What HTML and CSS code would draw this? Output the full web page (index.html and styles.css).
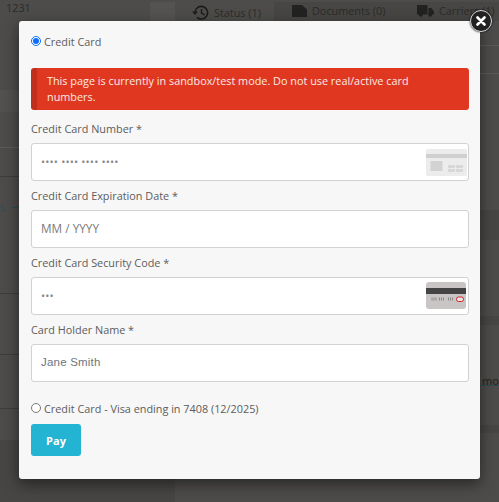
FILE: index.html

```html
<!DOCTYPE html>
<html lang="en">
<head>
  <meta charset="UTF-8">
  <title>Payment</title>
  <link rel="stylesheet" href="styles.css">
</head>
<body>

  <div class="backdrop">
    <div class="bg-shade bg-tab-a"></div>
    <div class="bg-shade bg-tab-b"></div>
    <div class="bg-shade bg-left-col"></div>
    <div class="bg-shade bg-left-band"></div>
    <div class="bg-shade bg-right-a"></div>
    <div class="bg-shade bg-right-b"></div>
    <div class="bg-shade bg-right-c"></div>
    <div class="bg-line bg-line-a"></div>
    <div class="bg-line bg-line-b"></div>
    <div class="bg-line bg-line-c"></div>
    <div class="bg-line bg-line-d"></div>
    <div class="bg-line bg-line-e"></div>
    <div class="bg-line bg-line-f"></div>
    <div class="bg-line bg-line-g"></div>
    <div class="bg-line bg-teal bg-teal-a"></div>
    <div class="bg-line bg-teal bg-teal-b"></div>
    <span class="bg-text bg-id">1231</span>
    <span class="bg-text bg-s">s</span>
    <span class="bg-text bg-status">
      <svg width="17" height="15" viewBox="0 0 17 15"><path d="M3 7.500a6.300 6.300 0 1 1 2 4.800" fill="none" stroke="#1c1c1b" stroke-width="1.600"/><path d="M0 6.500h6l-3 3.500z" fill="#1c1c1b"/><path d="M9.500 4v4l3 1.800" fill="none" stroke="#1c1c1b" stroke-width="1.400"/></svg>
      Status (1)
    </span>
    <span class="bg-text bg-docs">
      <svg width="15" height="12" viewBox="0 0 15 12"><path d="M0 0h10l5 4.500V12H0z" fill="#222221"/></svg>
      Documents (0)
    </span>
    <span class="bg-text bg-carriers">
      <svg width="17" height="12" viewBox="0 0 17 12"><path d="M0 0h10.500v9.500H0zM11.500 3h2.800l2.700 3.500v3h-5.500z" fill="#222221"/><circle cx="3.800" cy="9.800" r="2" fill="#222221"/><circle cx="13.200" cy="9.800" r="2" fill="#222221"/></svg>
      Carriers (1)
    </span>
    <span class="bg-text bg-amo">mo</span>
  </div>

  <div class="modal">
    <button class="close" type="button">
      <svg width="10" height="10" viewBox="0 0 10 10"><path d="M1.500 1.500l7 7M8.500 1.500l-7 7" stroke="#fff" stroke-width="2.600" stroke-linecap="round"/></svg>
    </button>

    <label class="radio-row radio-top">
      <input type="radio" name="method" checked>
      Credit Card
    </label>

    <div class="alert">This page is currently in sandbox/test mode. Do not use real/active card numbers.</div>

    <div class="field">
      <label>Credit Card Number *</label>
      <div class="input-box">
        <input type="text" class="input dots" placeholder="•••• •••• •••• ••••">
        <svg class="card-icon" width="41" height="27" viewBox="0 0 41 27">
          <rect width="41" height="27" rx="2" fill="#ececec"/>
          <rect y="5" width="41" height="4" fill="#d0d0d0"/>
          <rect x="4.500" y="12" width="12" height="10" fill="#d2d2d2"/>
          <rect x="22" y="16" width="7" height="3" fill="#d8d8d8"/>
          <rect x="30" y="16" width="7" height="3" fill="#d8d8d8"/>
          <rect x="22" y="20" width="7" height="3" fill="#d8d8d8"/>
          <rect x="30" y="20" width="7" height="3" fill="#d8d8d8"/>
        </svg>
      </div>
    </div>

    <div class="field">
      <label>Credit Card Expiration Date *</label>
      <div class="input-box">
        <input type="text" class="input" placeholder="MM / YYYY">
      </div>
    </div>

    <div class="field">
      <label>Credit Card Security Code *</label>
      <div class="input-box">
        <input type="text" class="input dots" placeholder="•••">
        <svg class="card-icon card-icon-cvv" width="40" height="27" viewBox="0 0 40 27">
          <rect width="40" height="27" rx="3" fill="#c9c5c5"/>
          <rect y="6" width="40" height="6" fill="#444"/>
          <path d="M5.500 17h5.500M13 17h6M22 17h6" stroke="#8a8a8a" stroke-width="3" stroke-dasharray="1 1"/>
          <rect x="30.500" y="15" width="7" height="4.500" rx="2" fill="#e8e4e4" stroke="#d2232a"/>
        </svg>
      </div>
    </div>

    <div class="field">
      <label>Card Holder Name *</label>
      <div class="input-box">
        <input type="text" class="input filled" value="Jane Smith">
      </div>
    </div>

    <label class="radio-row radio-saved">
      <input type="radio" name="method">
      Credit Card - Visa ending in 7408 (12/2025)
    </label>

    <button class="pay" type="button">Pay</button>
  </div>

</body>
</html>
```

FILE: styles.css

```css
html, body {
  margin: 0;
  height: 100%;
  overflow: hidden;
}
body {
  width: 499px;
  height: 502px;
  position: relative;
  background-color: #4d4c4a;
  font-family: "Open Sans", sans-serif;
  font-size: 10.85px;
  color: #5c5c5c;
}

/* page behind the overlay */
.backdrop {
  position: absolute;
  inset: 0;
  overflow: hidden;
}
.bg-shade {
  position: absolute;
}
.bg-tab-a {
  left: 150px;
  top: 2px;
  width: 25px;
  height: 19px;
  background: #545351;
}
.bg-tab-b {
  left: 274px;
  top: 2px;
  width: 225px;
  height: 19px;
  background: #474644;
}
.bg-left-col {
  left: 0;
  top: 440px;
  width: 175px;
  height: 62px;
  background: #474645;
}
.bg-left-band {
  left: 0;
  top: 90px;
  width: 19px;
  height: 22px;
  background: #525150;
}
.bg-right-a {
  left: 480px;
  top: 210px;
  width: 19px;
  height: 30px;
  background: #474644;
}
.bg-right-b {
  left: 480px;
  top: 316px;
  width: 19px;
  height: 9px;
  background: #474644;
}
.bg-right-c {
  left: 480px;
  top: 425px;
  width: 19px;
  height: 8px;
  background: #474644;
}
.bg-line {
  position: absolute;
  left: 0;
  width: 19px;
  height: 1px;
  background: #5b5a58;
}
.bg-line-a {
  top: 147px;
}
.bg-line-b {
  top: 176px;
  background: #3d3c3b;
}
.bg-line-c {
  top: 293px;
  background: #3d3c3b;
}
.bg-line-d {
  top: 354px;
  background: #3d3c3b;
}
.bg-line-e {
  top: 408px;
  background: #3d3c3b;
}
.bg-line-f {
  left: 480px;
  top: 45px;
}
.bg-line-g {
  left: 480px;
  top: 73px;
}
.bg-teal {
  background: #2d4c55;
}
.bg-teal-a {
  left: 12px;
  top: 207px;
  width: 7px;
}
.bg-teal-b {
  left: 480px;
  top: 385px;
}
.bg-text {
  position: absolute;
  font-size: 10.85px;
  color: #2b2b2a;
  display: flex;
  align-items: center;
  gap: 5px;
  white-space: nowrap;
}
.bg-id {
  left: 6px;
  top: 0;
}
.bg-s {
  left: 0;
  top: 199px;
  color: #2d4c55;
}
.bg-status {
  left: 192px;
  top: 5px;
}
.bg-docs {
  left: 292px;
  top: 3px;
}
.bg-carriers {
  left: 417px;
  top: 3px;
}
.bg-amo {
  left: 482px;
  top: 373px;
  font-weight: 600;
}

/* modal */
.modal {
  position: absolute;
  left: 19px;
  top: 21px;
  width: 461px;
  height: 458px;
  box-sizing: border-box;
  padding: 12px 11px 12px 12px;
  background: #f7f7f7;
  border-radius: 3px;
  box-shadow: 0 5px 15px rgba(0, 0, 0, 0.5);
  display: flex;
  flex-direction: column;
}
.close {
  position: absolute;
  right: -12px;
  top: -11px;
  width: 22px;
  height: 22px;
  padding: 0;
  box-sizing: border-box;
  border: 1.5px solid #ddd;
  border-radius: 50%;
  background: #222;
  box-shadow: 0 0 2px #000;
  display: flex;
  align-items: center;
  justify-content: center;
}
.radio-row {
  display: flex;
  align-items: center;
  gap: 3px;
  height: 16px;
}
.radio-row input {
  margin: 0;
  width: 10px;
  height: 10px;
  accent-color: #0d6efd;
}
.radio-top {
  margin-bottom: 19px;
}
.alert {
  height: 42px;
  box-sizing: border-box;
  padding: 5px 10px;
  border-left: 6px solid #c0301c;
  border-radius: 3px;
  background: #e03820;
  color: #fbe9e5;
  line-height: 16px;
}
.field {
  display: flex;
  flex-direction: column;
  margin-top: 11px;
}
.field label {
  height: 22px;
  line-height: 16px;
}
.field + .field {
  margin-top: 7px;
}
.input-box {
  position: relative;
}
.input {
  display: block;
  width: 100%;
  height: 38px;
  box-sizing: border-box;
  padding: 0 9px 2px;
  border: 1px solid #d2d2d2;
  border-radius: 3px;
  background: #fff;
  font-family: "Open Sans", sans-serif;
  font-size: 11.8px;
  color: #666;
}
.input::placeholder {
  color: #7a7a7a;
  opacity: 1;
}
.dots {
  padding-bottom: 1px;
  font-size: 11px;
  letter-spacing: 0.15px;
}
.dots::placeholder {
  color: #888;
}
.filled {
  font-family: "Liberation Sans", sans-serif;
  font-size: 11.5px;
  letter-spacing: 0.2px;
  color: #6d7580;
}
.card-icon {
  position: absolute;
  right: 2px;
  top: 6px;
}
.card-icon-cvv {
  right: 3px;
  top: 5px;
}
.radio-saved {
  margin-top: 18px;
}
.pay {
  width: 50px;
  height: 32px;
  margin-top: 8px;
  padding: 0;
  border: 0;
  border-radius: 3px;
  background: #23b3d3;
  color: #fff;
  font-family: "Open Sans", sans-serif;
  font-size: 11px;
  font-weight: 700;
}
```
